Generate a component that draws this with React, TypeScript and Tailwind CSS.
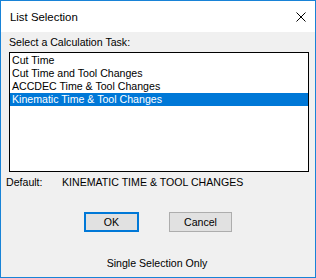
const items = [
  'Cut Time',
  'Cut Time and Tool Changes',
  'ACCDEC Time & Tool Changes',
  'Kinematic Time & Tool Changes',
];

export default function App() {
  const selected = 3;
  return (
    <div className="w-[316px] h-[278px] border border-[#1883d7] bg-[#f0f0f0] flex flex-col font-['Liberation_Sans',Arial,sans-serif] text-[10.6px] text-black">
      {/* title bar */}
      <div className="h-[31px] bg-white flex items-center justify-between pl-[9px] pr-[9px]">
        <span className="text-[11.4px] leading-[16px]">List Selection</span>
        <svg width="10" height="10" viewBox="0 0 10 10">
          <path d="M0.5 0.5 L9.5 9.5 M9.5 0.5 L0.5 9.5" stroke="#000" strokeWidth="1" />
        </svg>
      </div>

      {/* body */}
      <div className="flex flex-col pt-[4px]">
        <div className="ml-[8px] leading-[13px]">Select a Calculation Task:</div>
        <div className="ml-[8px] mt-[3px] w-[300px] h-[120px] border border-black bg-white pt-[1px]">
          {items.map((item, i) => (
            <div
              key={item}
              className={
                i === selected
                  ? 'h-[13px] leading-[13px] pl-[2px] bg-[#0078d7] text-white'
                  : 'h-[13px] leading-[13px] pl-[2px]'
              }
            >
              {item}
            </div>
          ))}
        </div>

        <div className="flex mt-[4px] ml-[5px] leading-[13px]">
          <span className="w-[56px]">Default:</span>
          <span>KINEMATIC TIME &amp; TOOL CHANGES</span>
        </div>

        <div className="flex mt-[23px] ml-[83px] gap-[30px]">
          <button className="w-[55px] h-[20px] border-2 border-[#0078d7] bg-[#e1e1e1] leading-[14px]">
            OK
          </button>
          <button className="w-[63px] h-[20px] border border-[#adadad] bg-[#e1e1e1] leading-[14px]">
            Cancel
          </button>
        </div>

        <div className="mt-[25px] text-center leading-[13px] pr-[2px]">Single Selection Only</div>
      </div>
    </div>
  );
}
